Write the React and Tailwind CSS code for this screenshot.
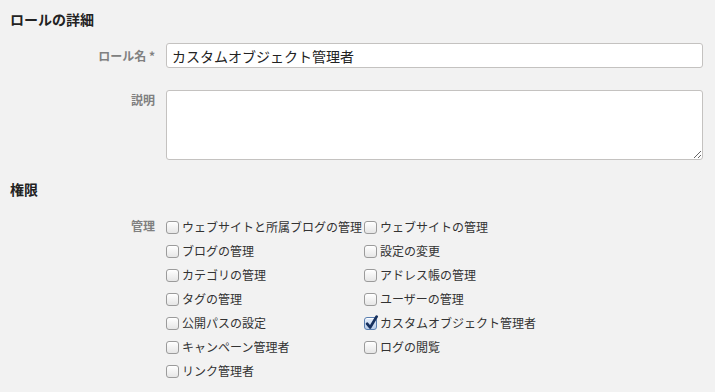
import React from "react";

const Box = ({ checked }) => (
  <span
    className={
      "relative inline-block w-[13px] h-[13px] shrink-0 rounded-[3px] border shadow-[inset_0_1px_0_#fff] " +
      (checked
        ? "border-[#5a7fb0] bg-gradient-to-b from-[#e8f0fb] to-[#b9cde9]"
        : "border-[#9b9b9b] bg-gradient-to-b from-white to-[#e6e6e6]")
    }
  >
    {checked && (
      <svg className="absolute left-[0px] top-[-3px]" width="14" height="15" viewBox="0 0 14 15">
        <path d="M2.2 8.8 L5.2 12.4 L11.6 1.6" fill="none" stroke="#16305e" strokeWidth="2.8" strokeLinecap="round" strokeLinejoin="round" />
      </svg>
    )}
  </span>
);

const Item = ({ label, checked }) => (
  <div className="flex items-center h-[24px] gap-[3px]">
    <Box checked={checked} />
    <span className="text-[12px] leading-[24px] text-[#333] whitespace-nowrap">{label}</span>
  </div>
);

const col1 = [
  "ウェブサイトと所属ブログの管理",
  "ブログの管理",
  "カテゴリの管理",
  "タグの管理",
  "公開パスの設定",
  "キャンペーン管理者",
  "リンク管理者",
];
const col2 = [
  ["ウェブサイトの管理"],
  ["設定の変更"],
  ["アドレス帳の管理"],
  ["ユーザーの管理"],
  ["カスタムオブジェクト管理者", true],
  ["ログの閲覧"],
];

export default function App() {
  return (
    <div
      className="w-[715px] h-[392px] overflow-hidden bg-[#f2f2f2] text-[#333]"
      style={{ fontFamily: '"Noto Sans CJK JP", "Noto Sans", sans-serif' }}
    >
      <div className="pt-[10px] pl-[10px] pr-[12px]">
        <h2 className="text-[14px] leading-[18px] font-bold text-[#222]">ロールの詳細</h2>

        <div className="mt-[15px] flex">
          <div className="w-[145px] text-right text-[12px] leading-[25px] font-bold text-[#808080]">
            ロール名 *
          </div>
          <input
            readOnly
            value="カスタムオブジェクト管理者"
            className="ml-[11px] w-[537px] h-[25px] px-[5px] bg-white border border-[#c4c2c0] rounded-[3px] text-[14px] text-[#222] outline-none"
            style={{ fontFamily: '"Noto Sans CJK JP", "Noto Sans", sans-serif' }}
          />
        </div>

        <div className="mt-[22px] flex">
          <div className="w-[145px] text-right text-[12px] leading-[20px] font-bold text-[#808080]">
            説明
          </div>
          <textarea
            readOnly
            className="ml-[11px] w-[537px] h-[70px] bg-white border border-[#c4c2c0] rounded-[3px] outline-none"
          />
        </div>

        <h2 className="mt-[20px] text-[14px] leading-[18px] font-bold text-[#222]">権限</h2>

        <div className="mt-[17px] flex">
          <div className="w-[145px] text-right text-[12px] leading-[22px] font-bold text-[#808080]">
            管理
          </div>
          <div className="ml-[11px] flex">
            <div className="w-[198px] flex flex-col">
              {col1.map((l) => (
                <Item key={l} label={l} />
              ))}
            </div>
            <div className="flex flex-col">
              {col2.map(([l, c]) => (
                <Item key={l} label={l} checked={c} />
              ))}
            </div>
          </div>
        </div>
      </div>
    </div>
  );
}
